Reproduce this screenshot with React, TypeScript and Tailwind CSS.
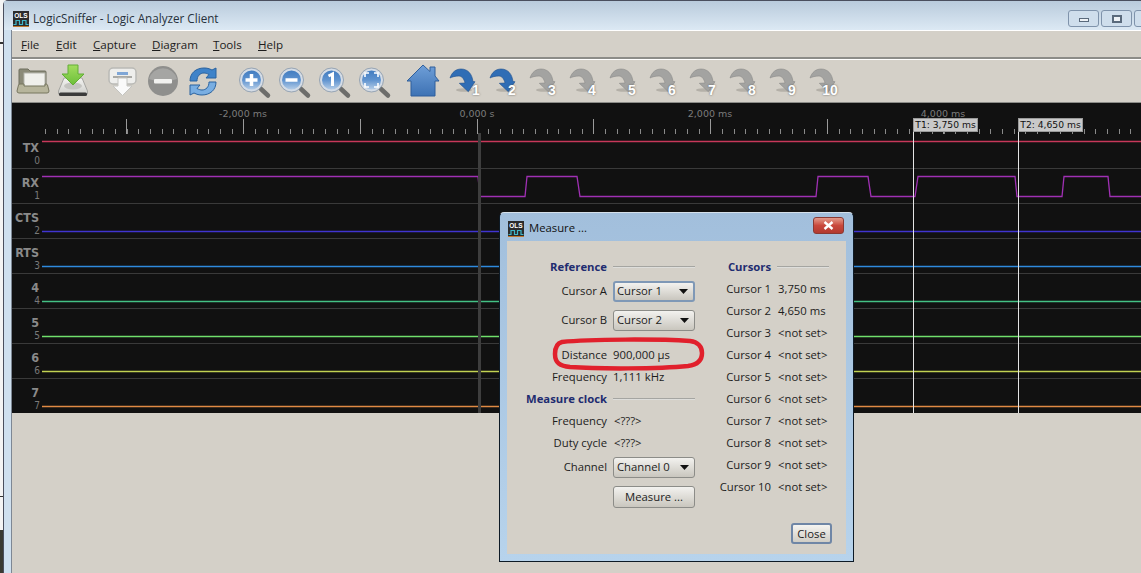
import type { ReactNode } from "react";

const ui = "font-['Open_Sans',sans-serif]";
const WIDTH = 1099;

function OlsLogo() {
  return (
    <svg width="16" height="16" viewBox="0 0 16 16" className="shrink-0">
      <rect width="16" height="16" fill="#2b2b2b" />
      <rect y="15" width="16" height="1" fill="#c07a30" />
      <text x="8" y="7" textAnchor="middle" fontSize="6.5" fontWeight="700" fill="#fff" fontFamily="Liberation Sans">
        OLS
      </text>
      <path d="M0.5 13.5H3V9.5H6.5V13.5H9.5V9.5H13V13.5H15.5" fill="none" stroke="#3fb6c8" strokeWidth="1.2" />
    </svg>
  );
}

function FolderIcon() {
  return (
    <svg width="40" height="40" viewBox="0 0 40 40">
      <path d="M6 24V9q0-1 1-1h8l2 2h15q1 0 1 1v13z" fill="#8b8a78" stroke="#6f6e5e" />
      <rect x="11" y="12" width="21" height="14" fill="#f0f0ec" stroke="#b4b4ac" />
      <path d="M7 23h4v2h21v-2h1q1 0 1.500 1l1.500 6q0 2-2 2H6q-2 0-2-2l1.500-6q.5-1 1.500-1z" fill="#b7b59c" stroke="#77765f" />
    </svg>
  );
}

function SaveIcon() {
  return (
    <svg width="40" height="40" viewBox="0 0 40 40">
      <defs>
        <linearGradient id="disk" x1="0" y1="0" x2="0" y2="1">
          <stop offset="0" stopColor="#f4f4f2" />
          <stop offset="1" stopColor="#cfcfcb" />
        </linearGradient>
        <linearGradient id="down" x1="0" y1="0" x2="0" y2="1">
          <stop offset="0" stopColor="#a2dd5e" />
          <stop offset="1" stopColor="#6cbf3a" />
        </linearGradient>
      </defs>
      <path d="M11 17h18l5.500 13v3h-29v-3z" fill="url(#disk)" stroke="#a5a5a1" />
      <rect x="6" y="31.500" width="28" height="3.500" rx="1.500" fill="#3a3a3a" />
      <ellipse cx="20" cy="25" rx="9" ry="3.500" fill="#c4c4c0" />
      <path d="M15 4h10v9h6L20 24 9 13h6z" fill="url(#down)" stroke="#62ad36" />
    </svg>
  );
}

function CaptureIcon() {
  return (
    <svg width="40" height="40" viewBox="0 0 40 40">
      <rect x="6" y="7" width="27" height="16" rx="4" fill="#eeeeec" stroke="#b9b9b5" strokeWidth="1.500" />
      <rect x="14" y="11" width="11" height="3" fill="#7fa6d6" />
      <rect x="10" y="15" width="19" height="2" fill="#a9a9a5" />
      <path d="M15 17h9v8h5l-9.500 9.500L10 25h5z" fill="#fafafa" stroke="#c4c4c0" />
    </svg>
  );
}

function StopIcon() {
  return (
    <svg width="40" height="40" viewBox="0 0 40 40">
      <circle cx="20" cy="20" r="15" fill="#8f8f8d" />
      <path d="M6 18a14.500 14.500 0 0 1 28 0q-14 5-28 0z" fill="#a5a5a3" />
      <rect x="11" y="18" width="18" height="4.500" rx="1" fill="#f1f1ef" />
    </svg>
  );
}

function RefreshIcon() {
  const band = "M7 20C7 12 13 7 21 7c3 0 5 .5 8 2l4-2v10H23l3-3.500c-2-1-3.500-1.500-5-1.500-4 0-7 3-7 8z";
  return (
    <svg width="40" height="40" viewBox="0 0 40 40">
      <path d={band} fill="#3f83c9" stroke="#2b639f" />
      <path d={band} fill="#79aee2" stroke="#2b639f" transform="rotate(180 20 20.500)" />
    </svg>
  );
}

function ZoomIcon({ id, children }: { id: string; children: ReactNode }) {
  return (
    <svg width="40" height="40" viewBox="0 0 40 40">
      <defs>
        <linearGradient id={id} x1="0" y1="0" x2="0" y2="1">
          <stop offset="0" stopColor="#3f7abf" />
          <stop offset="0.5" stopColor="#5f93cf" />
          <stop offset="1" stopColor="#bed3ea" />
        </linearGradient>
      </defs>
      <path d="M28 28l7 6.500" stroke="#6d6d6b" strokeWidth="4.500" strokeLinecap="round" />
      <circle cx="18.500" cy="19" r="10.500" fill={`url(#${id})`} stroke="#d4dce6" strokeWidth="2" />
      <circle cx="18.500" cy="19" r="12" fill="none" stroke="#8598ae" strokeWidth="0.800" />
      {children}
    </svg>
  );
}

function HomeIcon() {
  return (
    <svg width="40" height="40" viewBox="0 0 40 40">
      <defs>
        <linearGradient id="home" x1="0" y1="0" x2="0" y2="1">
          <stop offset="0" stopColor="#6f9fd8" />
          <stop offset="1" stopColor="#3d72b4" />
        </linearGradient>
      </defs>
      <path d="M20 4l7 6.500V6h5v9l4 5h-4v15H8V20H4z" fill="url(#home)" stroke="#2f5f9c" />
    </svg>
  );
}

function JumpIcon({ active }: { active: boolean }) {
  const fill = active ? "#2f6db5" : "#a3a3a1";
  const dark = active ? "#1f4f8c" : "#8a8a88";
  return (
    <svg width="40" height="40" viewBox="0 0 40 40">
      <ellipse cx="21" cy="29" rx="8" ry="1.800" fill="#b4b0a8" />
      <path
        d="M7 17C9 11 13 8 18 8 25 8 29 13 30 20.500L32 20.700 25.300 30.700 16.300 22.300 22 22C21 18 19 15 16 15 12 15 9 16 7 17z"
        fill={fill}
        stroke={dark}
        strokeWidth="0.600"
      />
    </svg>
  );
}

function ToolButton({ children, badge }: { children: ReactNode; badge?: string }) {
  const nudge = badge === "1" ? "left-[4px]" : badge === "10" ? "-left-[2px]" : "left-0";
  return (
    <div className="relative w-10 h-10 shrink-0">
      {children}
      {badge ? (
        <span
          className={`absolute ${nudge} w-[58px] text-center top-[21px] text-[14px] leading-4 font-bold text-white font-['Liberation_Sans',sans-serif] [text-shadow:0_0_2px_#555]`}
        >
          {badge}
        </span>
      ) : null}
    </div>
  );
}

function Menu({ first, rest, width }: { first: string; rest: string; width: string }) {
  return (
    <span className={width}>
      <span className="underline">{first}</span>
      {rest}
    </span>
  );
}

function Ruler() {
  const minors = Array.from({ length: 94 }, (_, i) => 45 - 42 + i * 11.67);
  const majors = [126, 243, 360, 477, 593, 710, 827, 943, 1060].map((x) => x - 42);
  const labels = [
    { x: 243, t: "-2,000 ms" },
    { x: 477, t: "0,000 s" },
    { x: 710, t: "2,000 ms" },
    { x: 943, t: "4,000 ms" },
  ];
  return (
    <div className="h-[30px] pl-[30px]">
      <svg width={WIDTH} height="31" className="overflow-visible">
        {minors.map((x) => (
          <path key={x} d={`M${Math.round(x) + 0.5} 26V31`} stroke="#8a8a8a" />
        ))}
        {majors.map((x) => (
          <path key={x} d={`M${x + 0.5} 16V31`} stroke="#9a9a9a" />
        ))}
        {labels.map((l) => (
          <text key={l.t} x={l.x - 42} y="14" textAnchor="middle" fontSize="9.500" fill="#7c7c7c" fontFamily="DejaVu Sans">
            {l.t}
          </text>
        ))}
      </svg>
    </div>
  );
}

const rx: [number, number][] = [
  [42, 8.5], [478, 8.5], [480, 28.5], [525, 28.5], [527, 8.5], [577, 8.5], [580, 28.5], [816, 28.5], [818, 8.5],
  [868, 8.5], [871, 28.5], [915, 28.5], [918, 8.5], [1015, 8.5], [1017, 28.5], [1062, 28.5], [1064, 8.5],
  [1108, 8.5], [1110, 28.5], [1141, 28.5],
];

const channels = [
  { name: "TX", color: "#c8385a", y: 8.5 },
  { name: "RX", color: "#a030b4", y: 0 },
  { name: "CTS", color: "#4034d0", y: 28.5 },
  { name: "RTS", color: "#2f8ade", y: 28.5 },
  { name: "4", color: "#43c084", y: 28.5 },
  { name: "5", color: "#70e06c", y: 28.5 },
  { name: "6", color: "#c2d252", y: 28.5 },
  { name: "7", color: "#e08a44", y: 28.5 },
];

function ChannelRow({ index }: { index: number }) {
  const c = channels[index];
  const points =
    c.name === "RX" ? rx.map(([x, y]) => `${x - 42},${y}`).join(" ") : `0,${c.y} ${WIDTH},${c.y}`;
  return (
    <div className={`h-[35px] flex ${index > 0 ? "border-t border-[#3a3a3a]" : ""}`}>
      <div
        className={`w-[30px] shrink-0 pr-[2px] text-right text-[#8a8a8a] font-['DejaVu_Sans_Condensed','DejaVu_Sans',sans-serif] ${
          index > 0 ? "-mt-px" : ""
        }`}
      >
        <div className="h-[22px] pt-[8px] pr-[1px] text-[12.5px] leading-[14px] font-bold whitespace-nowrap">{c.name}</div>
        <div className="text-[10px] leading-[12px] text-[#7a7a7a]">{index}</div>
      </div>
      <svg width={WIDTH} height="35" className={index > 0 ? "-mt-px" : ""}>
        <polyline points={points} fill="none" stroke={c.color} strokeWidth="1.300" />
      </svg>
    </div>
  );
}

function CursorFlag({ label, className }: { label: string; className: string }) {
  return (
    <div className={`absolute top-[15px] h-[295px] border-l border-[#e4e4e4] ${className}`}>
      <div className="h-[14px] w-[65px] -ml-px bg-[#c9c9c9] border border-[#9a9a9a] text-[9.2px] leading-[12px] text-center whitespace-nowrap text-[#111] font-['DejaVu_Sans',sans-serif]">
        {label}
      </div>
    </div>
  );
}

function Combo({ label, focused }: { label: string; focused?: boolean }) {
  return (
    <div
      className={`h-[21px] w-[82px] rounded-[3px] flex items-center justify-between pr-[5px] bg-gradient-to-b from-[#f3f2ef] to-[#c9c6be] text-[#1c1c1c] ${
        focused ? "border-2 border-[#7f98b6] pl-[2px]" : "border border-[#8c8c88] pl-[3px]"
      }`}
    >
      <span>{label}</span>
      <svg width="9" height="5" viewBox="0 0 9 5">
        <path d="M0 0h9L4.500 5z" fill="#111" />
      </svg>
    </div>
  );
}

function FormRow({
  label,
  className = "",
  heading,
  children,
}: {
  label: string;
  className?: string;
  heading?: boolean;
  children?: ReactNode;
}) {
  return (
    <div className={`grid grid-cols-[100px_82px] gap-x-[6px] items-center ${className}`}>
      <span className={`text-right whitespace-nowrap ${heading ? "font-bold text-[#1f2c70]" : ""}`}>{label}</span>
      {children}
    </div>
  );
}

function HeadingLine() {
  return <div className="h-[2px] bg-gradient-to-b from-[#8a8a86] to-[#fbfbf9]" />;
}

function MeasureDialog() {
  const cursors = [
    "3,750 ms",
    "4,650 ms",
    "<not set>",
    "<not set>",
    "<not set>",
    "<not set>",
    "<not set>",
    "<not set>",
    "<not set>",
    "<not set>",
  ];
  return (
    <div className="absolute left-[499px] top-[212px] w-[355px] h-[350px] border border-[#0d1a26] border-t-[#d5e0ea] rounded-t-[5px] bg-gradient-to-b from-[#a2bfdc] to-[#b7d3ec] px-[7px] pb-[7px] flex flex-col text-[11.3px]">
      <div className="h-[28px] shrink-0 pt-[3px] pl-px flex items-center gap-[5px] text-[#111]">
        <OlsLogo />
        <span>Measure ...</span>
        <div className="ml-auto mr-[2px] mt-[-7px] w-[31px] h-[17px] rounded-[3px] border border-[#8a3a34] bg-gradient-to-b from-[#e29a8c] via-[#c9483c] to-[#b23a30] grid place-items-center">
          <svg width="11" height="9" viewBox="0 0 11 9">
            <path d="M1.500 1l8 7M9.500 1l-8 7" stroke="#fff" strokeWidth="2.400" />
          </svg>
        </div>
      </div>
      <div className="flex-1 bg-[#d4d0c8] flex flex-col text-[#1c1c1c] pt-[15px] relative">
        <div className="flex">
          <div className="flex flex-col">
            <FormRow label="Reference" heading className="h-[22px]">
              <HeadingLine />
            </FormRow>
            <FormRow label="Cursor A" className="mt-[3px]">
              <Combo label="Cursor 1" focused />
            </FormRow>
            <FormRow label="Cursor B" className="mt-[8px]">
              <Combo label="Cursor 2" />
            </FormRow>
            <FormRow label="Distance" className="h-[22px] mt-[13px]">
              <span>900,000 µs</span>
            </FormRow>
            <FormRow label="Frequency" className="h-[22px]">
              <span>1,111 kHz</span>
            </FormRow>
            <FormRow label="Measure clock" heading className="h-[22px]">
              <HeadingLine />
            </FormRow>
            <FormRow label="Frequency" className="h-[22px]">
              <span className="pl-[1px]">{"<???>"}</span>
            </FormRow>
            <FormRow label="Duty cycle" className="h-[22px]">
              <span className="pl-[1px]">{"<???>"}</span>
            </FormRow>
            <FormRow label="Channel" className="mt-[3px]">
              <Combo label="Channel 0" />
            </FormRow>
            <FormRow label="" className="mt-[8px]">
              <div className="h-[22px] rounded-[3px] border border-[#8c8c88] bg-gradient-to-b from-[#f3f2ef] to-[#c9c6be] text-center leading-[20px]">
                Measure ...
              </div>
            </FormRow>
          </div>
          <div className="grid grid-cols-[76px_auto] gap-x-[6px] auto-rows-[22px] items-center w-[134px]">
            <span className="text-right font-bold text-[#1f2c70]">Cursors</span>
            <div className="w-[52px]">
              <HeadingLine />
            </div>
            {cursors.map((value, i) => (
              <div key={i} className="contents">
                <span className="text-right whitespace-nowrap">Cursor {i + 1}</span>
                <span className="whitespace-nowrap pl-px">{value}</span>
              </div>
            ))}
          </div>
        </div>
        <div className="mt-auto mb-[10px] mr-[14px] self-end w-[41px] h-[21px] rounded-[3px] border-2 border-[#6f86a6] bg-gradient-to-b from-[#f5f4f1] to-[#d0cdc5] text-center leading-[17px]">
          Close
        </div>
        {/* red marker drawn on the screenshot */}
        <svg width="156" height="34" viewBox="0 0 156 34" className="absolute left-[43px] top-[96px]">
          <path
            d="M12 5C40 2 110 2 140 4c8 1 12 6 12 12 0 8-6 12-14 13-30 3-90 3-118 1C10 29 5 26 5 17 5 10 8 6 12 5z"
            fill="none"
            stroke="#e1202c"
            strokeWidth="4.500"
          />
        </svg>
      </div>
    </div>
  );
}

export default function App() {
  return (
    <div className={`relative w-[1141px] h-[573px] overflow-hidden flex bg-[#eef0f2] text-[11.6px] ${ui}`}>
      <div className="w-[3px] shrink-0 flex flex-col">
        <div className="h-[42px] bg-[#f4f4f4]" />
        <div className="h-[2px] bg-[#333]" />
        <div className="h-[452px] bg-[#f4f4f4]" />
        <div className="h-px bg-[#333]" />
        <div className="h-[33px] bg-[#f4f4f4]" />
        <div className="flex-1 bg-[#3a3a32]" />
      </div>
      <div className="flex-1 flex flex-col border-l border-t border-[#4a4f5e] rounded-tl-[5px] bg-[#cfe0ef] pl-[8px]">
        <div className="h-[29px] -ml-[8px] pl-[9px] pt-[7px] shrink-0 flex items-center gap-[4px] text-[#27313b] bg-gradient-to-b from-[#b9cbdc] to-[#dce9f4]">
          <OlsLogo />
          <span className="text-[11.7px]">LogicSniffer - Logic Analyzer Client</span>
          <div className="ml-auto flex gap-[2px] -mr-[24px] self-start mt-[2px]">
            <div className="w-[31px] h-[17px] rounded-[3px] border border-[#7f93ab] bg-[#cfdeec] grid place-items-center">
              <div className="w-[10px] h-[4px] mt-[3px] bg-[#eef2f6] border border-[#5a6a7c]" />
            </div>
            <div className="w-[31px] h-[17px] rounded-[3px] border border-[#7f93ab] bg-[#cfdeec] grid place-items-center">
              <div className="w-[10px] h-[8px] border-2 border-[#5a6a7c] bg-[#eef2f6]" />
            </div>
            <div className="w-[31px] h-[17px] rounded-[3px] border border-[#7f93ab] bg-[#cfdeec]" />
          </div>
        </div>
        <div className="flex-1 flex flex-col bg-[#d4d0c8] border-l border-[#7d8794] -ml-px">
          <div className="h-[29px] shrink-0 pt-[2px] border-t border-white border-b-2 border-b-[#8c8c88] flex items-center pl-[9px] text-[#1c1c1c]">
            <Menu first="F" rest="ile" width="w-[35px]" />
            <Menu first="E" rest="dit" width="w-[37px]" />
            <Menu first="C" rest="apture" width="w-[59px]" />
            <Menu first="D" rest="iagram" width="w-[61px]" />
            <Menu first="T" rest="ools" width="w-[45px]" />
            <Menu first="H" rest="elp" width="w-[40px]" />
          </div>
          <div className="h-[43px] shrink-0 border-t border-white flex items-center pl-px">
            <ToolButton><FolderIcon /></ToolButton>
            <ToolButton><SaveIcon /></ToolButton>
            <div className="w-[10px] shrink-0" />
            <ToolButton><CaptureIcon /></ToolButton>
            <ToolButton><StopIcon /></ToolButton>
            <ToolButton><RefreshIcon /></ToolButton>
            <div className="w-[10px] shrink-0" />
            <ToolButton>
              <ZoomIcon id="zoom-in">
                <path d="M12.500 19h12M18.500 13v12" stroke="#fff" strokeWidth="3.500" />
              </ZoomIcon>
            </ToolButton>
            <ToolButton>
              <ZoomIcon id="zoom-out">
                <path d="M12.500 19h12" stroke="#fff" strokeWidth="3.500" />
              </ZoomIcon>
            </ToolButton>
            <ToolButton>
              <ZoomIcon id="zoom-one">
                <path d="M15.500 15l4-2v12" fill="none" stroke="#fff" strokeWidth="3" />
              </ZoomIcon>
            </ToolButton>
            <ToolButton>
              <ZoomIcon id="zoom-fit">
                <path d="M12 16v-4h4M21 12h4v4M25 22v4h-4M16 26h-4v-4" fill="none" stroke="#fff" strokeWidth="1.600" />
              </ZoomIcon>
            </ToolButton>
            <div className="w-[10px] shrink-0" />
            <ToolButton><HomeIcon /></ToolButton>
            {["1", "2", "3", "4", "5", "6", "7", "8", "9", "10"].map((n, i) => (
              <ToolButton key={n} badge={n}>
                <JumpIcon active={i < 2} />
              </ToolButton>
            ))}
          </div>
          <div className="relative h-[311px] shrink-0 border-t border-[#8c8c88] bg-[#111] overflow-hidden">
            <Ruler />
            {channels.map((_, i) => (
              <ChannelRow key={i} index={i} />
            ))}
            <div className="absolute left-[466px] top-[30px] bottom-0 w-[3px] bg-[#3e3e3e]" />
            <CursorFlag label="T1: 3,750 ms" className="left-[901px]" />
            <CursorFlag label="T2: 4,650 ms" className="left-[1006px]" />
          </div>
        </div>
      </div>
      <MeasureDialog />
    </div>
  );
}
